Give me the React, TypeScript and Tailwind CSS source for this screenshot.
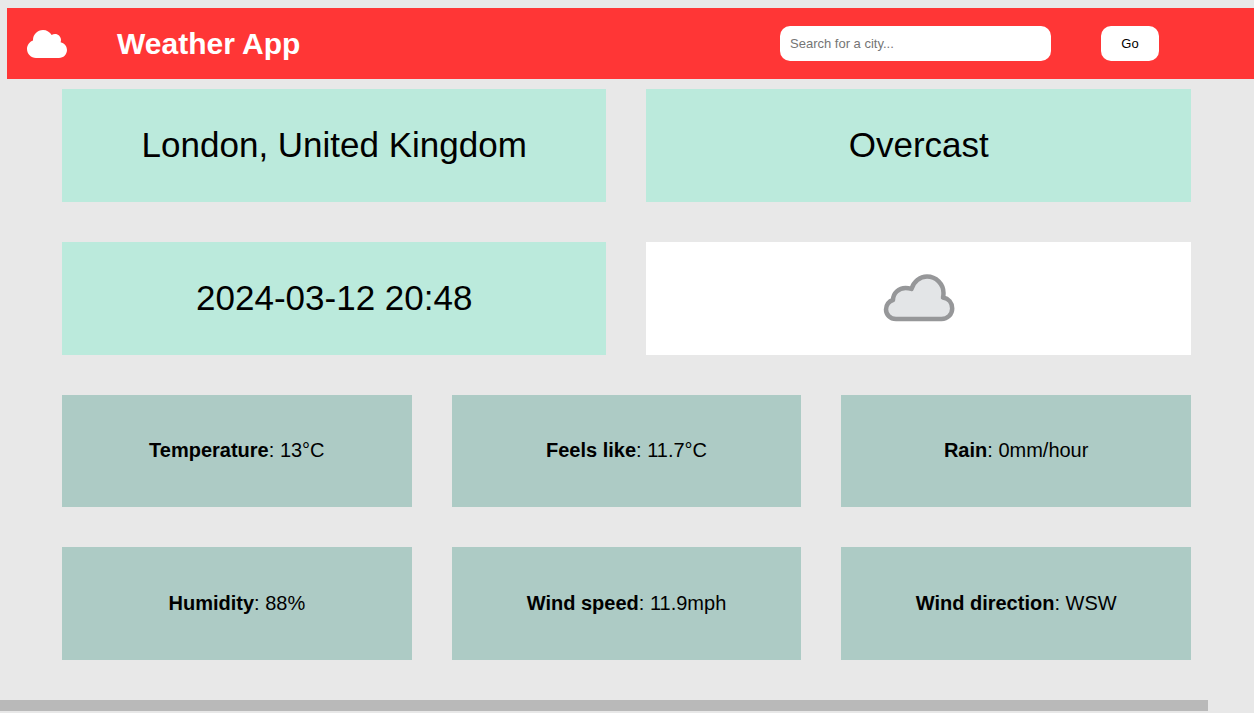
import React, { useState } from "react";
import { FaCloud } from "react-icons/fa";

const readings = [
  { label: "Temperature", value: "13°C" },
  { label: "Feels like", value: "11.7°C" },
  { label: "Rain", value: "0mm/hour" },
  { label: "Humidity", value: "88%" },
  { label: "Wind speed", value: "11.9mph" },
  { label: "Wind direction", value: "WSW" },
];

function OvercastIcon() {
  return (
    <svg viewBox="0 0 72 48" className="h-12 w-[72px]" role="img" aria-label="Overcast">
      <path
        d="M13 45C7 45 3 40.500 3 35.500C3 31 6 27 10 26C10 19 16 14 22.500 14C24.500 14 26.500 14.300 28.500 15C30.500 7.500 37 2.500 44 2.500C53 2.500 60.500 10 60.500 19C60.500 20.500 60.400 22 60 23.500C65.500 24.500 69.200 29 69.200 34.500C69.200 40.500 64.500 45 58.500 45Z"
        fill="#e3e5e7"
        stroke="#969799"
        strokeWidth="4.500"
        strokeLinejoin="round"
      />
    </svg>
  );
}

function Header() {
  const [city, setCity] = useState("");
  return (
    <header className="ml-[7px] flex h-[71px] shrink-0 items-center bg-[#ff3636] pr-[95px] pl-5 text-white">
      <FaCloud className="mr-[50px] h-8 w-10" aria-hidden="true" />
      <h1 className="text-[30px] leading-9 font-bold whitespace-nowrap">Weather App</h1>
      <form className="ml-auto flex gap-[50px]" onSubmit={(event) => event.preventDefault()}>
        <input
          type="text"
          aria-label="Search for a city"
          placeholder="Search for a city..."
          value={city}
          onChange={(event) => setCity(event.target.value)}
          className="h-[35px] w-[271px] rounded-[10px] bg-white px-2.5 text-[13px] text-black placeholder:text-[#757575]"
        />
        <button type="submit" className="h-[35px] w-[58px] rounded-[10px] bg-white text-[13px] text-black">
          Go
        </button>
      </form>
    </header>
  );
}

export default function App() {
  return (
    <div className="flex min-h-screen flex-col bg-[#e8e8e8] pt-2 pb-0.5 font-['Liberation_Sans',Arial,sans-serif] text-black">
      <Header />
      <main className="mt-2.5 mr-[63px] mb-10 ml-[62px] grid flex-1 auto-rows-fr grid-cols-6 gap-10 text-center">
        <section className="col-span-3 flex items-center justify-center bg-[#bbeadc] text-[35px] leading-normal">
          London, United Kingdom
        </section>
        <section className="col-span-3 flex items-center justify-center bg-[#bbeadc] text-[35px] leading-normal">
          Overcast
        </section>
        <section className="col-span-3 flex items-center justify-center bg-[#bbeadc] text-[35px] leading-normal">
          2024-03-12 20:48
        </section>
        <section className="col-span-3 flex items-center justify-center bg-white">
          <OvercastIcon />
        </section>
        {readings.map(({ label, value }) => (
          <section key={label} className="col-span-2 flex items-center justify-center bg-[#adcbc5] text-[20px] leading-[23px]">
            <p>
              <strong>{label}</strong>: {value}
            </p>
          </section>
        ))}
      </main>
      <div className="mr-[46px] h-[11px] shrink-0 bg-[#b9b9b9]" />
    </div>
  );
}
